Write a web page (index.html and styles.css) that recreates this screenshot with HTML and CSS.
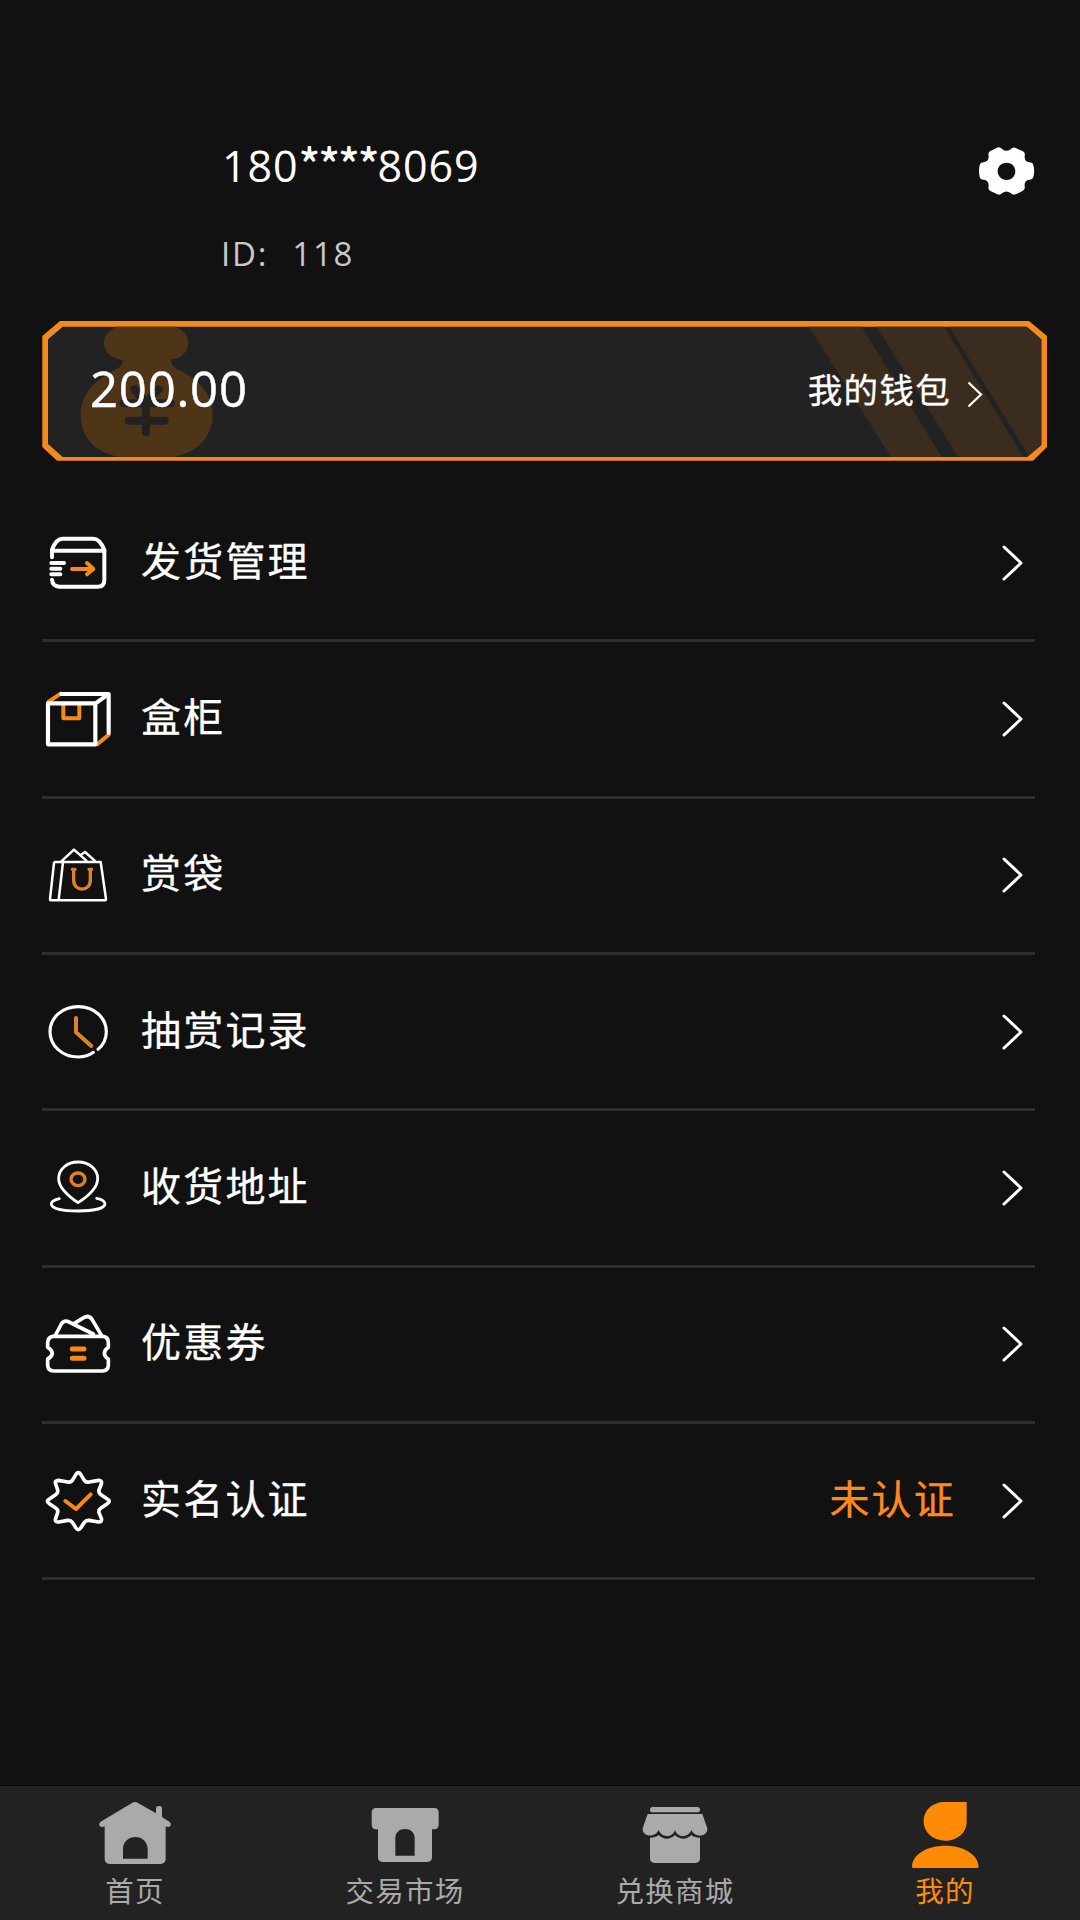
FILE: index.html
```html
<!DOCTYPE html>
<html lang="zh-CN">
<head>
<meta charset="utf-8">
<title>我的</title>
<link rel="stylesheet" href="styles.css">
</head>
<body>
<div class="page">
  <header class="profile">
    <div class="who">
      <div class="phone">180<span class="mask">****</span>8069</div>
      <div class="uid"><span class="uid-key">ID:</span><span>118</span></div>
    </div>
    <svg class="gear" viewBox="108 72 182 162">
      <path fill="#fff" fill-rule="evenodd" d="M174 82Q181 81 187 88Q199 97 212 88Q218 81 225 83L249 94Q257 99 254 108Q253 125 268 127Q278 127 280 135Q285 154 280 172Q277 180 268 179Q252 181 254 199Q256 207 249 212L227 223Q219 227 212 219Q199 210 187 219Q180 227 172 223L150 212Q143 207 146 199Q147 181 131 179Q121 179 119 171Q115 154 119 136Q121 127 131 127Q147 125 146 107Q143 99 150 94ZM200 128C184 128 173 140 173 154S184 180 200 180S226 168 226 154S216 128 200 128Z"/>
    </svg>
  </header>

  <section class="wallet">
    <svg class="wallet-bg" viewBox="0 0 1006 140">
      <path fill="#f58a1c" d="M18 0H987L1005 15V126L991 139.700H15L.3 126V15Z"/>
      <path fill="#222" d="M20.700 5.700H984.700L999.300 18.300V124L985.300 136H20.700L6 123V18.300Z"/>
      <g transform="translate(-12 -11) scale(.33333)">
        <path fill="#4f3518" d="M262 50H436C462 60 475 80 475 100C475 125 455 146 424 148C420 162 430 172 445 180C500 205 548 245 548 315C548 380 500 430 430 441H270C200 430 152 385 152 315C152 255 190 215 250 182C268 174 280 164 278 149C245 147 222 126 222 99C222 77 237 59 262 50Z"/>
        <path class="yen" d="M314 238L348 278L386 238M280 280H422M296 332H404M348 280V367"/>
      </g>
      <g transform="translate(698 -11) scale(.33333)" fill="#3a2c1e">
        <path d="M207 50H365L605 441H453Z"/>
        <path d="M410 50H612L850 441H655Z"/>
        <path d="M627 50H860L904 88V405L866 437Z"/>
      </g>
    </svg>
    <div class="balance">200.00</div>
    <div class="wallet-link">我的钱包
      <svg class="mini-chevron" viewBox="0 0 16 27"><path d="M1.500 1.500L14 13.500L1.500 25.500"/></svg>
    </div>
  </section>

  <ul class="menu">
    <li class="row">
      <svg class="icon" viewBox="42 55 204 204">
        <path class="w" stroke-width="12" d="M66 140V117Q78 84 98 84H190Q209 84 223 117V208Q223 228 203 228H88Q68 228 66 207M66 120H224M64 157H102M64 174H91M64 191H91"/>
        <path class="o" stroke-width="12" d="M126 175H190M171 157L190 175L171 191"/>
      </svg>
      <span class="label">发货管理</span>
      <svg class="chevron" viewBox="0 0 22 36"><path d="M2 2L19 18L2 34"/></svg>
    </li>
    <li class="row">
      <svg class="icon" viewBox="42 524 204 204">
        <path class="o" stroke-width="12" d="M56 574L92 550M202 702L236 673M100 584V624H148V584"/>
        <path class="w" stroke-width="12.500" d="M54 579H196V702H54ZM94 551H236V668M200 577L234 552"/>
      </svg>
      <span class="label">盒柜</span>
      <svg class="chevron" viewBox="0 0 22 36"><path d="M2 2L19 18L2 34"/></svg>
    </li>
    <li class="row">
      <svg class="icon" viewBox="42 63 204 204">
        <path class="w" stroke-width="7.500" d="M76 126H212L228 237Q228 241 223 241H65Q60 241 60 237L72 129Q73 126 76 126ZM99 126L86 240M94 124L132 89L169 122M153 104L165 96L194 122"/>
        <path class="o dim" stroke-width="10" d="M131 149V181C131 216 181 216 181 181V149M127 148H135M177 148H185"/>
      </svg>
      <span class="label">赏袋</span>
      <svg class="chevron" viewBox="0 0 22 36"><path d="M2 2L19 18L2 34"/></svg>
    </li>
    <li class="row">
      <svg class="icon" viewBox="42 532 204 204">
        <path class="w" stroke-width="9.500" d="M190 695C178 704 162 709 145 709C97 709 60 675 60 633S97 558 145 558S229 592 229 633C229 654 219 673 204 686"/>
        <path class="o dim" stroke-width="12" d="M138 592V635L184 676"/>
      </svg>
      <span class="label">抽赏记录</span>
      <svg class="chevron" viewBox="0 0 22 36"><path d="M2 2L19 18L2 34"/></svg>
    </li>
    <li class="row">
      <svg class="icon" viewBox="42 71 204 204">
        <path class="w" stroke-width="8.500" d="M144 217C125 204 86 177 86 145C86 116 112 95 144 95S203 116 203 145C203 177 164 204 144 217ZM88 205C71 209 63 215 64 222C66 235 101 242 144 242S223 235 225 221C225 213 216 207 200 204"/>
        <ellipse class="o dim" stroke-width="10" cx="144" cy="147" rx="21" ry="19"/>
      </svg>
      <span class="label">收货地址</span>
      <svg class="chevron" viewBox="0 0 22 36"><path d="M2 2L19 18L2 34"/></svg>
    </li>
    <li class="row">
      <svg class="icon" viewBox="42 540 204 204">
        <path class="w" stroke-width="11" d="M68 619H220Q235 622 235 637V652Q224 658 223 670Q224 681 235 687V706Q234 722 218 723H71Q54 722 53 706V687Q65 681 67 670Q65 658 53 652V637Q54 622 68 619ZM76 616L94 582Q103 569 117 576L190 612M132 581L161 563Q176 554 186 568L215 617"/>
        <path class="o" stroke-width="15" d="M127 657H162M127 685H162"/>
      </svg>
      <span class="label">优惠券</span>
      <svg class="chevron" viewBox="0 0 22 36"><path d="M2 2L19 18L2 34"/></svg>
    </li>
    <li class="row">
      <svg class="icon" viewBox="42 79 204 204">
        <path class="w" stroke-width="11" d="M138 101Q145 91 152 101L163 119Q168 126 177 124L206 119Q217 119 214 130L207 148Q205 157 213 162L232 175Q244 182 232 189L213 202Q205 207 207 216L214 233Q217 244 206 244L177 239Q168 238 163 245L152 262Q145 272 138 262L127 245Q122 238 113 239L86 244Q73 244 77 233L83 216Q85 207 77 202L58 189Q46 182 58 175L77 162Q85 157 83 148L77 130Q73 119 86 119L113 124Q122 126 127 119Z"/>
        <path class="o" stroke-width="12" d="M106 181L138 205L182 161"/>
      </svg>
      <span class="label">实名认证</span>
      <span class="status">未认证</span>
      <svg class="chevron" viewBox="0 0 22 36"><path d="M2 2L19 18L2 34"/></svg>
    </li>
  </ul>

  <nav class="tabs">
    <a class="tab">
      <svg class="tab-icon" viewBox="117 90 216 207">
        <path fill="#aaa" fill-rule="evenodd" d="M216 99Q225 93 234 99L288 130V114Q288 108 298 108Q306 108 306 114V141L329 156Q335 162 331 168Q326 173 317 169V268Q316 281 302 282H149Q135 281 134 268V169Q124 174 119 168Q115 161 122 155ZM189 266H263V238C263 214 245 201 226 201S189 214 189 238Z"/>
      </svg>
      <span class="tab-text">首页</span>
    </a>
    <a class="tab">
      <svg class="tab-icon" viewBox="927 90 216 207">
        <path fill="#aaa" fill-rule="evenodd" d="M947 114H1124Q1135 115 1136 126V165Q1135 177 1124 178H1116V264Q1115 275 1103 276H967Q955 275 954 264V178H947Q936 177 935 165V126Q936 115 947 114ZM1006 257H1064V205C1064 187 1051 177 1035 177S1006 187 1006 205Z"/>
      </svg>
      <span class="tab-text">交易市场</span>
    </a>
    <a class="tab">
      <svg class="tab-icon" viewBox="177 90 216 207">
        <g fill="#aaa">
          <rect x="210" y="111" width="150" height="16" rx="8"/>
          <path d="M203 132H367L382 175C385 200 346 206 334 180C326 203 293 205 285 180C277 205 244 203 236 180C224 206 185 200 188 175Z"/>
          <path d="M210 203Q227 203 236 195Q260 218 285 195Q310 218 334 195Q343 203 360 203V267Q359 278 347 279H223Q211 278 210 267Z"/>
        </g>
      </svg>
      <span class="tab-text">兑换商城</span>
    </a>
    <a class="tab active">
      <svg class="tab-icon" viewBox="987 90 216 207">
        <path fill="#ff8a05" d="M1094 96H1160V155C1160 190 1129 212 1096 212S1031 190 1031 154C1031 119 1060 96 1094 96ZM999 294Q996 294 996 289C998 252 1042 227 1096 227S1193 252 1196 289Q1196 294 1192 294Z"/>
      </svg>
      <span class="tab-text">我的</span>
    </a>
  </nav>
</div>
</body>
</html>
```
FILE: styles.css
```css
* { box-sizing: border-box; }

body {
  margin: 0;
  background: #111;
  color: #fff;
  font-family: "Open Sans", "Noto Sans CJK SC", sans-serif;
}

.page {
  width: 1080px;
  height: 1920px;
  display: flex;
  flex-direction: column;
}

.profile {
  height: 321px;
  padding: 134px 43px 0 222px;
  display: flex;
  justify-content: space-between;
}

.phone {
  height: 62px;
  line-height: 64px;
  font-size: 43px;
  font-weight: 500;
  letter-spacing: .9px;
  white-space: nowrap;
}
.mask { font-family: "Noto Sans CJK SC", sans-serif; font-size: 45px; letter-spacing: -2px; line-height: 1; }

.uid {
  margin-top: 32px;
  margin-left: -1px;
  height: 52px;
  line-height: 52px;
  display: flex;
  gap: 24px;
  font-size: 33px;
  letter-spacing: 1.8px;
  color: #c8c8c8;
}

.gear { width: 60.670px; height: 54px; margin-top: 10px; }

.wallet {
  position: relative;
  width: 1006px;
  height: 140px;
  margin-left: 42px;
  padding: 0 65px 6px 48px;
  display: flex;
  align-items: center;
  justify-content: space-between;
}
.wallet-bg { position: absolute; left: 0; top: 0; width: 1006px; height: 140px; }
.yen { fill: none; stroke: #222; stroke-width: 24; stroke-linecap: round; }

.balance {
  position: relative;
  font-size: 49px;
  font-weight: 500;
  letter-spacing: .8px;
  -webkit-text-stroke: .5px currentColor;
}

.wallet-link {
  position: relative;
  display: flex;
  align-items: center;
  gap: 16px;
  font-size: 34.500px;
  letter-spacing: 1.300px;
  -webkit-text-stroke: .3px currentColor;
}
.mini-chevron { width: 16px; height: 27px; margin-top: 12px; fill: none; stroke: #fff; stroke-width: 2.200; }

.menu {
  flex: 1;
  margin: 0;
  padding: 25px 45px 0 42px;
  list-style: none;
}

.row {
  height: 156.330px;
  padding: 0 11px 0 2px;
  border-bottom: 3px solid #2e2e2e;
  display: flex;
  align-items: center;
}

.icon { width: 68px; height: 68px; overflow: visible; }
.w, .o { fill: none; stroke: #fff; stroke-linecap: round; stroke-linejoin: round; }
.o { stroke: #f58a1c; }
.dim { stroke: #df8226; }

.label, .status {
  font-size: 40px;
  letter-spacing: 2.200px;
  line-height: 60px;
  padding-bottom: 4px;
  -webkit-text-stroke: .3px currentColor;
}
.label { flex: 1; margin-left: 29px; }
.status { color: #ff8a1c; margin-right: 46px; }

.chevron { width: 22px; height: 36px; fill: none; stroke: #fff; stroke-width: 3; stroke-linecap: round; stroke-linejoin: round; }

.tabs {
  height: 135px;
  border-top: 1px solid #060606;
  background: #222;
  display: grid;
  grid-template-columns: repeat(4, 1fr);
}
.tab {
  padding-top: 14px;
  display: flex;
  flex-direction: column;
  align-items: center;
  color: #aaa;
}
.tab-icon { width: 72px; height: 69px; }
.tab-text { margin-top: 2px; font-size: 28.500px; line-height: 40px; letter-spacing: 1.200px; }
.tab.active { color: #ff8a05; }
```
